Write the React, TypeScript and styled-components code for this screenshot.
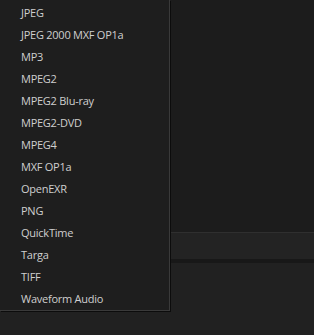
import React from 'react';
import styled, { createGlobalStyle } from 'styled-components';

const GlobalStyle = createGlobalStyle`
  html, body {
    margin: 0;
    padding: 0;
    background: #1c1c1c;
  }
  body {
    font-family: 'Open Sans', 'Noto Sans', sans-serif;
  }
`;

const Screen = styled.div`
  position: relative;
  width: 314px;
  height: 335px;
  overflow: hidden;
  display: flex;
  flex-direction: column;
  background: #1c1c1c;
`;

const TopArea = styled.div`
  height: 232px;
  background: #1c1c1c;
`;

const Band = styled.div`
  height: 26px;
  background: #232323;
  border-top: 1px solid #2f2f2f;
`;

const Divider = styled.div`
  height: 4px;
  background: #181818;
`;

const BottomArea = styled.div`
  flex: 1;
  background: #212121;
`;

const Menu = styled.ul`
  position: absolute;
  left: 0;
  top: 0;
  width: 169px;
  margin: 0;
  padding: 2px 0 0;
  list-style: none;
  background: #1e1e1e;
  border-right: 1px solid #3a3a3a;
  border-bottom: 1px solid #3a3a3a;
  box-shadow: 1px 1px 0 #0c0c0c;
`;

const Item = styled.li`
  height: 22px;
  line-height: 22px;
  padding-left: 21px;
  font-size: 11px;
  letter-spacing: -0.25px;
  color: #cfcfcf;
  white-space: nowrap;
`;

const formats = [
  'JPEG',
  'JPEG 2000 MXF OP1a',
  'MP3',
  'MPEG2',
  'MPEG2 Blu-ray',
  'MPEG2-DVD',
  'MPEG4',
  'MXF OP1a',
  'OpenEXR',
  'PNG',
  'QuickTime',
  'Targa',
  'TIFF',
  'Waveform Audio',
];

const App = () => {
  return (
    <Screen>
      <GlobalStyle />
      <TopArea />
      <Band />
      <Divider />
      <BottomArea />
      <Menu>
        {formats.map((name) => (
          <Item key={name}>{name}</Item>
        ))}
      </Menu>
    </Screen>
  );
};

export default App;
